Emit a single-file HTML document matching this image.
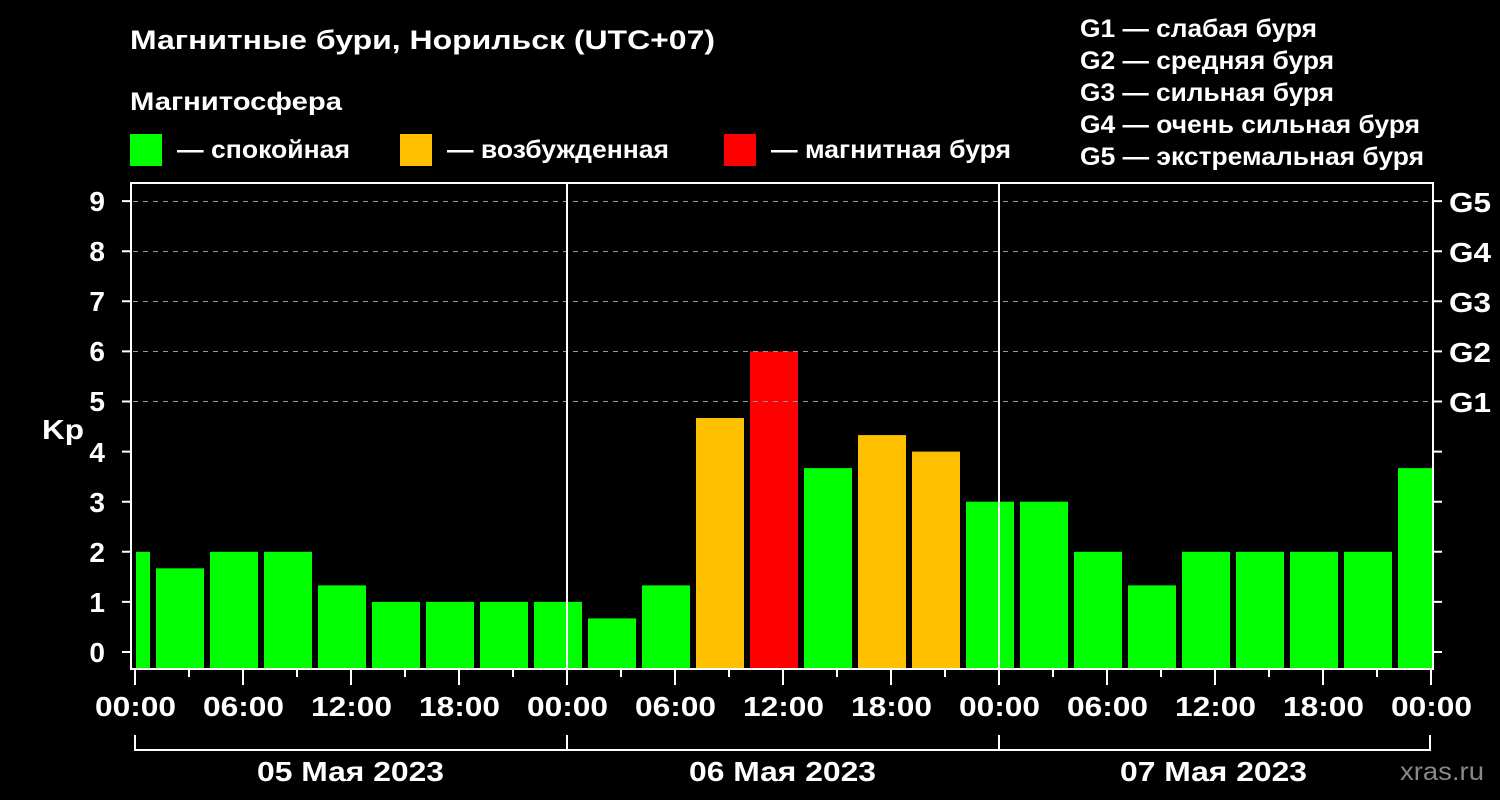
<!DOCTYPE html><html><head><meta charset="utf-8"><style>body{margin:0;background:#000}svg{display:block}text{font-family:"Liberation Sans",Arial,sans-serif;font-weight:bold;fill:#fff}</style></head><body>
<svg width="1500" height="800" viewBox="0 0 1500 800" font-family="Liberation Sans, Arial, sans-serif" font-weight="bold">
<rect width="1500" height="800" fill="#000"/>
<g>
<text x="130" y="49" font-size="27" textLength="585" lengthAdjust="spacingAndGlyphs">Магнитные бури, Норильск (UTC+07)</text>
<text x="130" y="110" font-size="25" textLength="212" lengthAdjust="spacingAndGlyphs">Магнитосфера</text>
<text x="177" y="158" font-size="25" textLength="173" lengthAdjust="spacingAndGlyphs">— спокойная</text>
<text x="447" y="158" font-size="25" textLength="222" lengthAdjust="spacingAndGlyphs">— возбужденная</text>
<text x="771" y="158" font-size="25" textLength="240" lengthAdjust="spacingAndGlyphs">— магнитная буря</text>
<text x="1080" y="37" font-size="25" textLength="237" lengthAdjust="spacingAndGlyphs">G1 — слабая буря</text>
<text x="1080" y="69" font-size="25" textLength="254" lengthAdjust="spacingAndGlyphs">G2 — средняя буря</text>
<text x="1080" y="101" font-size="25" textLength="254" lengthAdjust="spacingAndGlyphs">G3 — сильная буря</text>
<text x="1080" y="133" font-size="25" textLength="340" lengthAdjust="spacingAndGlyphs">G4 — очень сильная буря</text>
<text x="1080" y="165" font-size="25" textLength="344" lengthAdjust="spacingAndGlyphs">G5 — экстремальная буря</text>
</g>
<rect x="130" y="134" width="32" height="32" fill="#00ff00"/>
<rect x="400" y="134" width="32" height="32" fill="#ffc000"/>
<rect x="724" y="134" width="32" height="32" fill="#ff0000"/>
<g fill="#00ff00">
<rect x="136" y="551.8" width="14" height="116.2"/>
<rect x="156" y="568.3" width="48" height="99.7"/>
<rect x="210" y="551.8" width="48" height="116.2"/>
<rect x="264" y="551.8" width="48" height="116.2"/>
<rect x="318" y="585.4" width="48" height="82.6"/>
<rect x="372" y="601.9" width="48" height="66.1"/>
<rect x="426" y="601.9" width="48" height="66.1"/>
<rect x="480" y="601.9" width="48" height="66.1"/>
<rect x="534" y="601.9" width="48" height="66.1"/>
<rect x="588" y="618.4" width="48" height="49.6"/>
<rect x="642" y="585.4" width="48" height="82.6"/>
<rect x="696" y="418" width="48" height="250" fill="#ffc000"/>
<rect x="750" y="351.4" width="48" height="316.6" fill="#ff0000"/>
<rect x="804" y="468.1" width="48" height="199.9"/>
<rect x="858" y="435.1" width="48" height="232.9" fill="#ffc000"/>
<rect x="912" y="451.6" width="48" height="216.4" fill="#ffc000"/>
<rect x="966" y="501.7" width="48" height="166.3"/>
<rect x="1020" y="501.7" width="48" height="166.3"/>
<rect x="1074" y="551.8" width="48" height="116.2"/>
<rect x="1128" y="585.4" width="48" height="82.6"/>
<rect x="1182" y="551.8" width="48" height="116.2"/>
<rect x="1236" y="551.8" width="48" height="116.2"/>
<rect x="1290" y="551.8" width="48" height="116.2"/>
<rect x="1344" y="551.8" width="48" height="116.2"/>
<rect x="1398" y="468.1" width="34" height="199.9"/>
</g>
<g stroke="#999" stroke-width="1" stroke-dasharray="5,5">
<line x1="133" x2="1431" y1="201.5" y2="201.5"/><line x1="133" x2="1431" y1="251.5" y2="251.5"/><line x1="133" x2="1431" y1="301.5" y2="301.5"/><line x1="133" x2="1431" y1="351.5" y2="351.5"/><line x1="133" x2="1431" y1="401.5" y2="401.5"/>
</g>
<g stroke="#fff" stroke-width="2" fill="none">
<rect x="131" y="183" width="1302" height="486"/>
<line x1="567" y1="183" x2="567" y2="669"/><line x1="999" y1="183" x2="999" y2="669"/>
<path d="M135 735V750H1430V735M567 735V750M999 735V750"/>
<path d="M122 652H131M122 601.9H131M122 551.8H131M122 501.7H131M122 451.6H131M122 401.5H131M122 351.4H131M122 301.3H131M122 251.2H131M122 201.1H131"/>
<path d="M1433 652H1442M1433 601.9H1442M1433 551.8H1442M1433 501.7H1442M1433 451.6H1442M1433 401.5H1442M1433 351.4H1442M1433 301.3H1442M1433 251.2H1442M1433 201.1H1442"/>
<path d="M135 669V685M243 669V685M351 669V685M459 669V685M567 669V685M675 669V685M783 669V685M891 669V685M999 669V685M1107 669V685M1215 669V685M1323 669V685M1431 669V685"/>
<path d="M189 669V677M297 669V677M405 669V677M513 669V677M621 669V677M729 669V677M837 669V677M945 669V677M1053 669V677M1161 669V677M1269 669V677M1377 669V677"/>
</g>
<g font-size="28" text-anchor="end">
<text x="105" y="662">0</text><text x="105" y="612">1</text><text x="105" y="562">2</text><text x="105" y="512">3</text><text x="105" y="462">4</text><text x="105" y="411">5</text><text x="105" y="361">6</text><text x="105" y="311">7</text><text x="105" y="261">8</text><text x="105" y="211">9</text>
</g>
<g font-size="28">
<text x="1449" y="212" textLength="42" lengthAdjust="spacingAndGlyphs">G5</text><text x="1449" y="262" textLength="42" lengthAdjust="spacingAndGlyphs">G4</text><text x="1449" y="312" textLength="42" lengthAdjust="spacingAndGlyphs">G3</text><text x="1449" y="362" textLength="42" lengthAdjust="spacingAndGlyphs">G2</text><text x="1449" y="412" textLength="42" lengthAdjust="spacingAndGlyphs">G1</text>
<text x="42" y="439" textLength="42" lengthAdjust="spacingAndGlyphs">Kp</text>
</g>
<g font-size="28">
<text x="95" y="716" textLength="81" lengthAdjust="spacingAndGlyphs">00:00</text>
<text x="203" y="716" textLength="81" lengthAdjust="spacingAndGlyphs">06:00</text>
<text x="311" y="716" textLength="81" lengthAdjust="spacingAndGlyphs">12:00</text>
<text x="419" y="716" textLength="81" lengthAdjust="spacingAndGlyphs">18:00</text>
<text x="527" y="716" textLength="81" lengthAdjust="spacingAndGlyphs">00:00</text>
<text x="635" y="716" textLength="81" lengthAdjust="spacingAndGlyphs">06:00</text>
<text x="743" y="716" textLength="81" lengthAdjust="spacingAndGlyphs">12:00</text>
<text x="851" y="716" textLength="81" lengthAdjust="spacingAndGlyphs">18:00</text>
<text x="959" y="716" textLength="81" lengthAdjust="spacingAndGlyphs">00:00</text>
<text x="1067" y="716" textLength="81" lengthAdjust="spacingAndGlyphs">06:00</text>
<text x="1175" y="716" textLength="81" lengthAdjust="spacingAndGlyphs">12:00</text>
<text x="1283" y="716" textLength="81" lengthAdjust="spacingAndGlyphs">18:00</text>
<text x="1391" y="716" textLength="81" lengthAdjust="spacingAndGlyphs">00:00</text>
</g>
<g font-size="28">
<text x="257" y="781" textLength="187" lengthAdjust="spacingAndGlyphs">05 Мая 2023</text>
<text x="689" y="781" textLength="187" lengthAdjust="spacingAndGlyphs">06 Мая 2023</text>
<text x="1120" y="781" textLength="187" lengthAdjust="spacingAndGlyphs">07 Мая 2023</text>
</g>
<text x="1400" y="780" font-size="25" font-weight="normal" style="fill:#888;font-weight:normal" textLength="84" lengthAdjust="spacingAndGlyphs">xras.ru</text>
</svg></body></html>
